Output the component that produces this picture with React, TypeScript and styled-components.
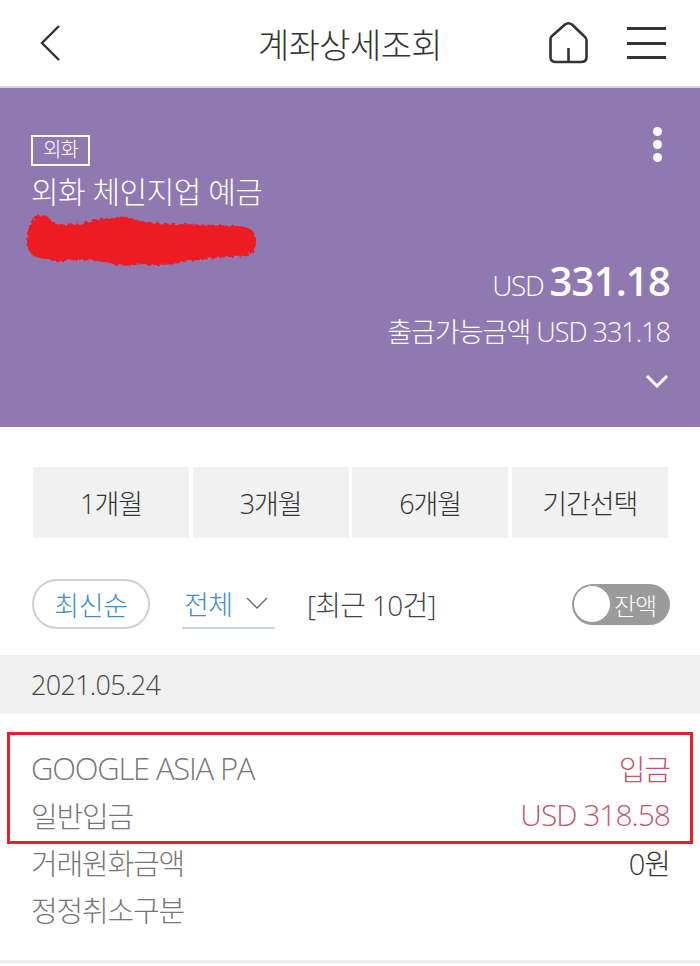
import React from 'react';
import styled, { createGlobalStyle } from 'styled-components';

const GlobalStyle = createGlobalStyle`
  html, body {
    margin: 0;
    padding: 0;
    background: #fff;
    font-family: "Open Sans", "Noto Sans CJK KR", sans-serif;
    font-weight: 300;
  }
  * { box-sizing: border-box; }
`;

const periods = ['1개월', '3개월', '6개월', '기간선택'];

const App: React.FC = () => {
  return (
    <Page>
      <GlobalStyle />
      <Header>
        <IconSlot>
          <svg width="24" height="38" viewBox="0 0 24 38" fill="none">
            <path d="M21 2 L4 19 L21 36" stroke="#333" strokeWidth="2.4" />
          </svg>
        </IconSlot>
        <Title>계좌상세조회</Title>
        <HeaderIcons>
          <svg width="42" height="44" viewBox="0 0 42 44" fill="none">
            <path
              d="M2.5 18 Q2.5 16 4 15 L17 3.5 Q20.5 1 24 3.5 L36 15 Q38.5 17 38.5 19 V36 Q38.5 41 33 41 H8 Q2.5 41 2.5 36 Z"
              stroke="#333"
              strokeWidth="2.6"
              strokeLinejoin="round"
            />
            <path d="M20.5 27 V41" stroke="#333" strokeWidth="2.6" />
          </svg>
          <Burger>
            <span />
            <span />
            <span />
          </Burger>
        </HeaderIcons>
      </Header>

      <AccountCard>
        <CardTop>
          <div>
            <Tag>외화</Tag>
            <AccountName>외화 체인지업 예금</AccountName>
          </div>
          <Dots>
            <span />
            <span />
            <span />
          </Dots>
        </CardTop>
        <Scribble width="240" height="60" viewBox="0 0 240 60">
          <defs>
            <filter id="rough" x="-5%" y="-10%" width="110%" height="120%">
              <feTurbulence type="fractalNoise" baseFrequency="0.25" numOctaves="2" seed="4" />
              <feDisplacementMap in="SourceGraphic" scale="5" />
            </filter>
          </defs>
          <path
            filter="url(#rough)"
            fill="#ed1c24"
            d="M3 30 Q3 10 14 5 Q24 3 28 11 Q40 16 58 12 Q76 7 90 7 Q100 3 112 9 Q130 13 150 13 Q180 13 212 15 Q229 15 232 26 Q233 40 224 45 Q205 46 190 47 Q170 49 150 53 Q130 55 118 53 Q100 57 86 52 Q60 47 40 50 Q22 50 10 45 Q3 41 3 30 Z"
          />
        </Scribble>
        <Balance>
          <small>USD</small> <strong>331.18</strong>
        </Balance>
        <Available>출금가능금액 USD 331.18</Available>
        <ExpandRow>
          <svg width="24" height="14" viewBox="0 0 24 14" fill="none">
            <path d="M2 2 L12 12 L22 2" stroke="#fff" strokeWidth="3" />
          </svg>
        </ExpandRow>
      </AccountCard>

      <PeriodRow>
        {periods.map((p) => (
          <PeriodButton key={p}>{p}</PeriodButton>
        ))}
      </PeriodRow>

      <FilterRow>
        <SortPill>최신순</SortPill>
        <TypeSelect>
          전체
          <svg width="24" height="14" viewBox="0 0 24 14" fill="none">
            <path d="M2 2 L12 12 L22 2" stroke="#666" strokeWidth="1.3" />
          </svg>
        </TypeSelect>
        <RecentCount>[최근 10건]</RecentCount>
        <Toggle>
          <Knob />
          잔액
        </Toggle>
      </FilterRow>

      <DateBand>2021.05.24</DateBand>

      <Transaction>
        <Highlight />
        <TxRow>
          <TxLabel $latin>GOOGLE ASIA PA</TxLabel>
          <TxValue $tone="red">입금</TxValue>
        </TxRow>
        <TxRow>
          <TxLabel>일반입금</TxLabel>
          <TxValue $tone="red" $latin>
            USD 318.58
          </TxValue>
        </TxRow>
        <TxRow>
          <TxLabel>거래원화금액</TxLabel>
          <TxValue>0원</TxValue>
        </TxRow>
        <TxRow>
          <TxLabel>정정취소구분</TxLabel>
        </TxRow>
      </Transaction>
    </Page>
  );
};
export default App;

const Page = styled.main`
  width: 700px;
  height: 966px;
  overflow: hidden;
  background: #fff;
`;

const Header = styled.header`
  height: 88px;
  display: flex;
  align-items: center;
  justify-content: space-between;
  padding: 0 34px 0 38px;
  border-bottom: 2px solid #d9d3e4;
  position: relative;
`;

const IconSlot = styled.div`
  width: 24px;
  height: 38px;
`;

const Title = styled.h1`
  position: absolute;
  left: 0;
  right: 0;
  margin: 0;
  text-align: center;
  font-size: 34px;
  font-weight: 300;
  letter-spacing: -0.6px;
  color: #333;
`;

const HeaderIcons = styled.div`
  display: flex;
  align-items: center;
  gap: 37px;
`;

const Burger = styled.div`
  width: 39px;
  height: 32px;
  display: flex;
  flex-direction: column;
  justify-content: space-between;

  span {
    display: block;
    height: 3px;
    background: #333;
  }
`;

const AccountCard = styled.section`
  height: 339px;
  background: #9079b0;
  color: #fff;
  padding: 47px 30px 0 31px;
`;

const CardTop = styled.div`
  display: flex;
  justify-content: space-between;
  align-items: flex-start;
`;

const Tag = styled.div`
  width: 59px;
  height: 31px;
  border: 2px solid #fff;
  font-size: 20px;
  line-height: 26px;
  text-align: center;
  letter-spacing: -1px;
`;

const AccountName = styled.div`
  margin-top: 5px;
  font-size: 30px;
  line-height: 42px;
  letter-spacing: -0.5px;
`;

const Dots = styled.div`
  display: flex;
  flex-direction: column;
  gap: 4px;
  margin-right: 8px;
  margin-top: -8px;

  span {
    width: 9px;
    height: 9px;
    border-radius: 50%;
    background: #fff;
  }
`;

const Scribble = styled.svg`
  display: block;
  margin: -2px 0 0 -7px;
`;

const Balance = styled.div`
  margin-top: -16px;
  text-align: right;
  line-height: 52px;

  small {
    font-size: 28px;
    letter-spacing: -1.4px;
    margin-right: 2px;
  }

  strong {
    font-size: 40px;
    font-weight: 600;
    letter-spacing: -0.8px;
  }
`;

const Available = styled.div`
  margin-top: -4px;
  text-align: right;
  font-size: 27px;
  line-height: 40px;
  letter-spacing: -1px;
`;

const ExpandRow = styled.div`
  display: flex;
  justify-content: flex-end;
  margin-top: 22px;
  padding-right: 1px;
`;

const PeriodRow = styled.div`
  display: grid;
  grid-template-columns: repeat(4, 156px);
  gap: 3.6px;
  padding: 40px 0 0 33px;
`;

const PeriodButton = styled.div`
  height: 71px;
  background: #f1f1f1;
  display: flex;
  align-items: center;
  justify-content: center;
  font-size: 27px;
  letter-spacing: -1.1px;
  color: #333;
`;

const FilterRow = styled.div`
  display: flex;
  align-items: center;
  height: 50px;
  margin-top: 41px;
  padding: 0 30px 0 32px;
`;

const SortPill = styled.div`
  width: 118px;
  height: 50px;
  border: 2px solid #d0d0d0;
  border-radius: 25px;
  display: flex;
  align-items: center;
  justify-content: center;
  font-size: 27px;
  letter-spacing: -0.3px;
  color: #3f8ec4;
`;

const TypeSelect = styled.div`
  width: 93px;
  height: 50px;
  margin-left: 32px;
  border-bottom: 2px solid #c5d6e2;
  display: flex;
  align-items: center;
  gap: 12px;
  padding-left: 2px;
  font-size: 27px;
  letter-spacing: -0.5px;
  color: #3f8ec4;
`;

const RecentCount = styled.div`
  margin-left: 32px;
  flex: 1;
  font-size: 28px;
  letter-spacing: -0.7px;
  color: #444;
`;

const Toggle = styled.div`
  width: 98px;
  height: 41px;
  border-radius: 21px;
  background: #9b9b9b;
  display: flex;
  align-items: center;
  font-size: 24px;
  letter-spacing: -1px;
  color: #fff;
  gap: 3px;
`;

const Knob = styled.div`
  width: 38px;
  height: 38px;
  margin-left: 1px;
  border-radius: 50%;
  background: #fff;
  border: 1px solid #999;
`;

const DateBand = styled.div`
  height: 59px;
  margin-top: 26px;
  background: #f1f1f1;
  display: flex;
  align-items: center;
  padding-left: 31px;
  font-size: 27px;
  letter-spacing: -0.7px;
  color: #444;
`;

const Transaction = styled.section`
  position: relative;
  height: 249px;
  padding: 30px 30px 0 32px;
  border-bottom: 3px solid #eeeeee;
`;

const Highlight = styled.div`
  position: absolute;
  left: 7px;
  top: 18px;
  width: 686px;
  height: 112px;
  border: 3px solid #e8202c;
`;

const TxRow = styled.div`
  display: flex;
  justify-content: space-between;
  align-items: center;
  height: 47px;
`;

const TxLabel = styled.span<{ $latin?: boolean }>`
  font-size: ${(p) => (p.$latin ? '31px' : '29px')};
  letter-spacing: ${(p) => (p.$latin ? '-1.2px' : '-1.2px')};
  margin-left: -1px;
  color: #777;
`;

const TxValue = styled.span<{ $tone?: 'red'; $latin?: boolean }>`
  font-size: ${(p) => (p.$latin ? '30px' : '29px')};
  letter-spacing: -1px;
  color: ${(p) => (p.$tone === 'red' ? '#c4566c' : '#333')};
`;
